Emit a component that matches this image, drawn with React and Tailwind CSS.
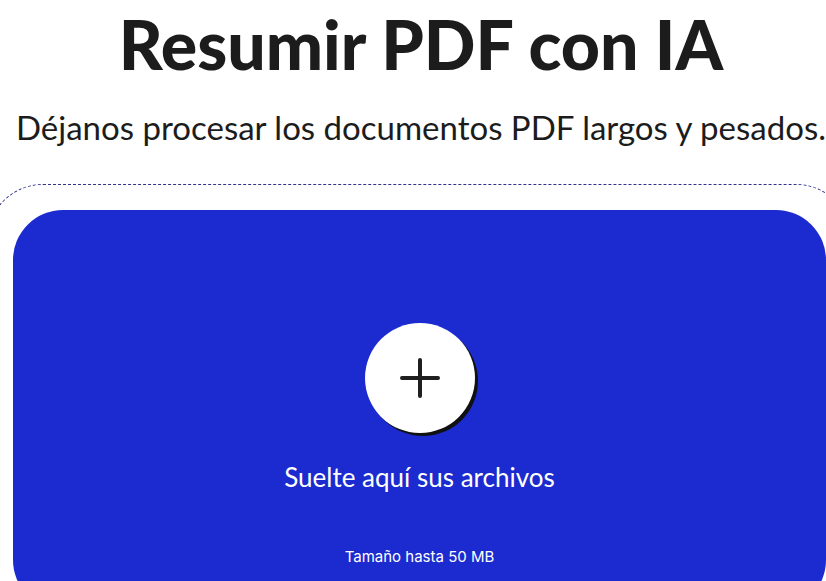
export default function App() {
  return (
    <div className="w-[842px] bg-white text-center overflow-hidden" style={{ fontFamily: 'Lato, "Noto Sans", sans-serif' }}>
      <h1 className="pt-[4px] text-[68px] leading-[80px] font-black text-[#1c1c1c]">
        Resumir PDF con IA
      </h1>
      <p className="mt-[23px] text-[33px] leading-[40px] text-[#1c1c1c]">
        Déjanos procesar los documentos PDF largos y pesados.
      </p>

      <div className="mt-[37px] ml-[-13px] w-[865px] rounded-[56px] border border-dashed border-[#34318a] pt-[25px] px-[25px]">
        <div className="h-[400px] rounded-[50px] bg-[#1b2bcf] flex flex-col items-center pt-[113px]">
          <button className="w-[110px] h-[110px] rounded-full bg-white flex items-center justify-center shadow-[3px_3px_0_#111]">
            <svg width="42" height="42" viewBox="0 0 42 42" fill="none" stroke="#1f1f1f" strokeWidth="4" strokeLinecap="round">
              <path d="M21 3v36M3 21h36" />
            </svg>
          </button>
          <div className="mt-[27px] text-[26px] leading-[34px] text-white">Suelte aquí sus archivos</div>
          <div className="mt-[53px] text-[15px] leading-[20px] text-white" style={{ fontFamily: 'Inter, sans-serif' }}>
            Tamaño hasta 50 MB
          </div>
        </div>
      </div>
    </div>
  )
}
